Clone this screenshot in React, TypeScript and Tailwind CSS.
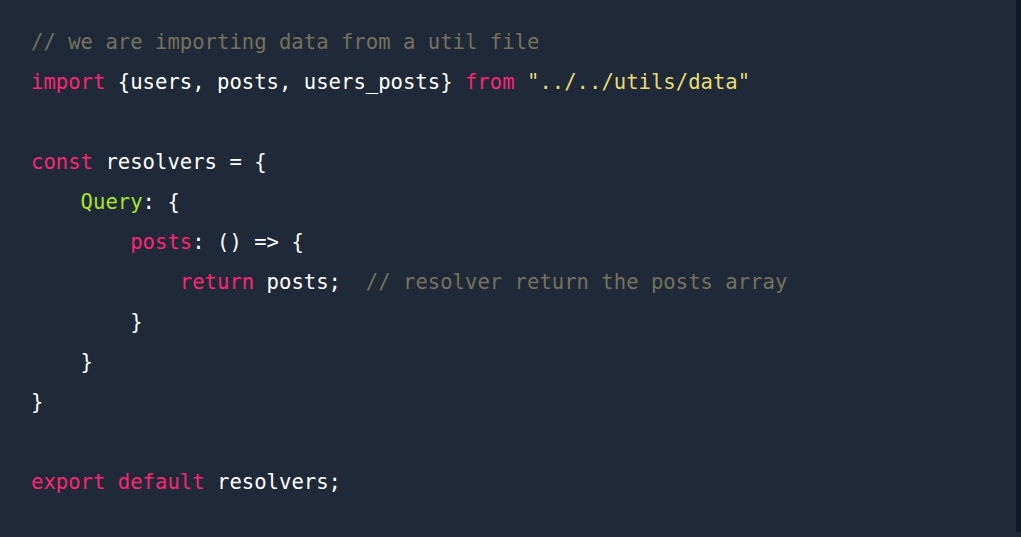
type Tok = [string, string];

const K = "text-[#f92672]";
const W = "text-white";
const C = "text-[#75715e]";
const S = "text-[#e6db74]";
const G = "text-[#a6e22e]";

const lines: Tok[][] = [
  [[C, "// we are importing data from a util file"]],
  [[K, "import"], [W, " {users, posts, users_posts} "], [K, "from"], [W, " "], [S, '"../../utils/data"']],
  [],
  [[K, "const"], [W, " resolvers = {"]],
  [[W, "    "], [G, "Query"], [W, ": {"]],
  [[W, "        "], [K, "posts"], [W, ": () => {"]],
  [[W, "            "], [K, "return"], [W, " posts;  "], [C, "// resolver return the posts array"]],
  [[W, "        }"]],
  [[W, "    }"]],
  [[W, "}"]],
  [],
  [[K, "export"], [W, " "], [K, "default"], [W, " resolvers;"]],
];

export default function App() {
  return (
    <div className="flex h-[537px] w-[1021px] bg-[#1f2937]">
      {/* code area */}
      <div className="flex-1 pl-[31px] pt-[22px]">
        <pre className="font-['DejaVu_Sans_Mono',monospace] text-[20.6px] leading-[40px]">
          {lines.map((line, i) => (
            <div key={i} className="h-[40px]">
              {line.map(([cls, text], j) => (
                <span key={j} className={cls}>
                  {text}
                </span>
              ))}
            </div>
          ))}
        </pre>
      </div>
      {/* scrollbar strip */}
      <div className="flex w-[5px] flex-col pb-[5px]">
        <div className="flex-1 rounded-b-[2px] bg-[#111827]" />
      </div>
    </div>
  );
}
